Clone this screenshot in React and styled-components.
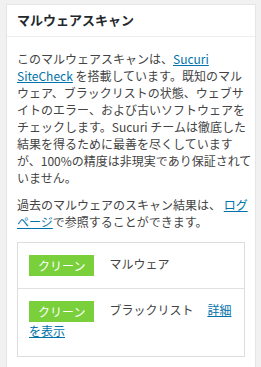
import React from 'react';
import styled, { createGlobalStyle } from 'styled-components';

const GlobalStyle = createGlobalStyle`
    html, body {
        margin: 0;
        padding: 0;
        background: #f1f1f1;
    }
    body {
        font-family: "Noto Sans CJK JP", "Noto Sans", sans-serif;
        color: #444;
    }
`;

const App = () => {
    return (
        <Page>
            <GlobalStyle />
            <Card>
                <Header>
                    <Title>マルウェアスキャン</Title>
                </Header>
                <Body>
                    <Text>
                        このマルウェアスキャンは、<Link href="#">Sucuri</Link>
                        <br />
                        <Link href="#">SiteCheck</Link> を搭載しています。既知のマル
                        <br />
                        ウェア、ブラックリストの状態、ウェブサ
                        <br />
                        イトのエラー、および古いソフトウェアを
                        <br />
                        チェックします。Sucuri チームは徹底した
                        <br />
                        結果を得るために最善を尽くしています
                        <br />
                        が、100%の精度は非現実であり保証されて
                        <br />
                        いません。
                    </Text>
                    <Text>
                        過去のマルウェアのスキャン結果は、 <Link href="#">ログ</Link>
                        <br />
                        <Link href="#">ページ</Link>で参照することができます。
                    </Text>
                    <Table>
                        <Row>
                            <Badge>クリーン</Badge>
                            <Label>マルウェア</Label>
                        </Row>
                        <Row>
                            <Badge>クリーン</Badge>
                            <Label>ブラックリスト</Label>
                            <Link href="#">詳細</Link>
                            <br />
                            <Link href="#">を表示</Link>
                        </Row>
                    </Table>
                </Body>
            </Card>
        </Page>
    );
};

export default App;


const Link = styled.a`
    color: #0073aa;
    text-decoration: underline;
`;
const Label = styled.span`
    margin-right: 14px;
`;
const Badge = styled.span`
    display: inline-block;
    background-color: #7ad03a;
    color: #fff;
    font-size: 12px;
    line-height: 15px;
    padding: 3px 9px 3px 9px;
    margin-right: 15px;
    vertical-align: middle;
`;
const Row = styled.div`
    padding: 12px 11px;
    font-size: 12px;
    line-height: 18px;
    & + & {
        border-top: 1px solid #e1e1e1;
        padding-top: 12px;
        padding-bottom: 16px;
    }
`;
const Table = styled.div`
    border: 1px solid #ddd;
    margin-top: 12px;
`;
const Text = styled.p`
    margin: 0 0 10px;
    font-size: 12px;
    line-height: 17px;
    white-space: nowrap;
`;
const Body = styled.div`
    padding: 13px 10px 11px;
`;
const Title = styled.h2`
    margin: 0;
    font-size: 13px;
    font-weight: 700;
    color: #23282d;
    line-height: 20px;
`;
const Header = styled.div`
    padding: 5px 10px 6px;
    border-bottom: 1px solid #eee;
`;
const Card = styled.div`
    width: 250px;
    box-sizing: border-box;
    background: #fff;
    border: 1px solid #e5e5e5;
    box-shadow: 0 1px 1px rgba(0, 0, 0, 0.04);
`;
const Page = styled.div`
    padding: 4px 5px 6px 6px;
`;
